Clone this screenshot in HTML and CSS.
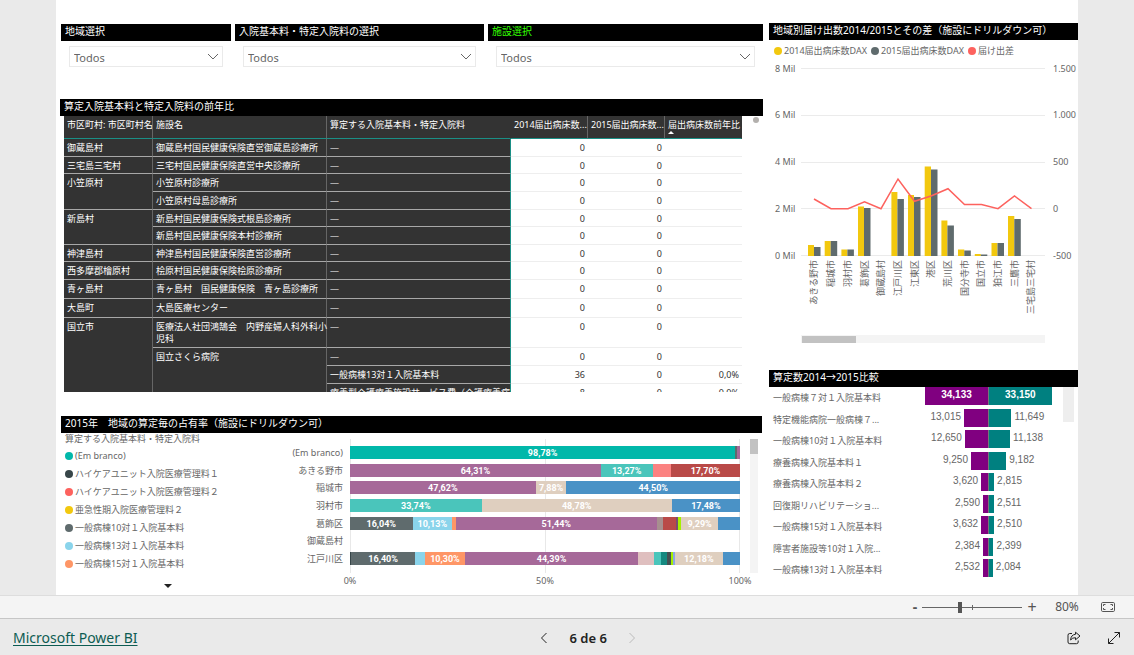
FILE: index.html
```html
<!DOCTYPE html>
<html lang="ja">
<head>
<meta charset="utf-8">
<meta name="viewport" content="width=device-width, initial-scale=1">
<title>Microsoft Power BI</title>
<link rel="stylesheet" href="styles.css">
</head>
<body>
<main class="report">
  <div class="col col-left">
    <form class="filters">
      <div class="filter filter-s">
        <label class="title" for="f-area">地域選択</label>
        <div class="select-box">
          <select id="f-area"><option>Todos</option></select>
          <svg class="chev" viewBox="0 0 12 8" aria-hidden="true"><path d="M1 1l5 5 5-5"/></svg>
        </div>
      </div>
      <div class="filter filter-m">
        <label class="title" for="f-fee">入院基本料・特定入院料の選択</label>
        <div class="select-box">
          <select id="f-fee"><option>Todos</option></select>
          <svg class="chev" viewBox="0 0 12 8" aria-hidden="true"><path d="M1 1l5 5 5-5"/></svg>
        </div>
      </div>
      <div class="filter filter-l">
        <label class="title title-green" for="f-site">施設選択</label>
        <div class="select-box">
          <select id="f-site"><option>Todos</option></select>
          <svg class="chev" viewBox="0 0 12 8" aria-hidden="true"><path d="M1 1l5 5 5-5"/></svg>
        </div>
      </div>
    </form>

    <section class="matrix">
      <h2 class="title">算定入院基本料と特定入院料の前年比</h2>
      <div class="matrix-body">
        <table>
          <colgroup><col class="c-city"><col class="c-site"><col><col class="c-num"><col class="c-num"><col class="c-num"></colgroup>
          <thead>
            <tr><th>市区町村: 市区町村名</th><th>施設名</th><th>算定する入院基本料・特定入院料</th><th>2014届出病床数...</th><th>2015届出病床数...</th><th>届出病床数前年比<span class="sort"></span></th></tr>
          </thead>
          <tbody>
            <tr><th>御蔵島村</th><th>御蔵島村国民健康保険直営御蔵島診療所</th><th>—</th><td>0</td><td>0</td><td></td></tr>
            <tr class="short"><th>三宅島三宅村</th><th>三宅村国民健康保険直営中央診療所</th><th>—</th><td>0</td><td>0</td><td></td></tr>
            <tr><th rowspan="2">小笠原村</th><th>小笠原村診療所</th><th>—</th><td>0</td><td>0</td><td></td></tr>
            <tr><th>小笠原村母島診療所</th><th>—</th><td>0</td><td>0</td><td></td></tr>
            <tr class="short"><th rowspan="2">新島村</th><th>新島村国民健康保険式根島診療所</th><th>—</th><td>0</td><td>0</td><td></td></tr>
            <tr><th>新島村国民健康保険本村診療所</th><th>—</th><td>0</td><td>0</td><td></td></tr>
            <tr class="short"><th>神津島村</th><th>神津島村国民健康保険直営診療所</th><th>—</th><td>0</td><td>0</td><td></td></tr>
            <tr><th>西多摩郡檜原村</th><th>桧原村国民健康保険桧原診療所</th><th>—</th><td>0</td><td>0</td><td></td></tr>
            <tr class="tall"><th>青ヶ島村</th><th>青ヶ島村　国民健康保険　青ヶ島診療所</th><th>—</th><td>0</td><td>0</td><td></td></tr>
            <tr class="tall"><th>大島町</th><th>大島医療センター</th><th>—</th><td>0</td><td>0</td><td></td></tr>
            <tr><th rowspan="4">国立市</th><th>医療法人社団鴻鵠会　内野産婦人科外科小<br>児科</th><th>—</th><td>0</td><td>0</td><td></td></tr>
            <tr><th rowspan="3">国立さくら病院</th><th>—</th><td>0</td><td>0</td><td></td></tr>
            <tr><th>一般病棟13対１入院基本料</th><td>36</td><td>0</td><td>0,0%</td></tr>
            <tr><th>療養型介護療養施設サービス費（介護療養病</th><td>8</td><td>0</td><td>0,0%</td></tr>
          </tbody>
        </table>
        <span class="scroll-dot"></span>
      </div>
    </section>

    <section class="share">
      <h2 class="title">2015年　地域の算定毎の占有率（施設にドリルダウン可）</h2>
      <div class="share-body">
        <div class="share-legend">
          <p>算定する入院基本料・特定入院料</p>
          <ul>
            <li><i class="teal"></i>(Em branco)</li>
            <li><i class="ink"></i>ハイケアユニット入院医療管理料１</li>
            <li><i class="coral"></i>ハイケアユニット入院医療管理料２</li>
            <li><i class="gold"></i>亜急性期入院医療管理料２</li>
            <li><i class="slate"></i>一般病棟10対１入院基本料</li>
            <li><i class="sky"></i>一般病棟13対１入院基本料</li>
            <li><i class="orange"></i>一般病棟15対１入院基本料</li>
          </ul>
          <span class="more"></span>
        </div>
        <ul class="share-names">
          <li>(Em branco)</li><li>あきる野市</li><li>稲城市</li><li>羽村市</li><li>葛飾区</li><li>御蔵島村</li><li>江戸川区</li>
        </ul>
        <div class="share-plot">
          <div class="bars">
            <div class="bar"><b class="teal" style="width:98.78%">98,78%</b><b class="slate" style="width:.4%"></b><b class="plum" style="width:.82%"></b></div>
            <div class="bar"><b class="plum" style="width:64.31%">64,31%</b><b class="aqua" style="width:13.27%">13,27%</b><b class="rose" style="width:4.72%"></b><b class="brick" style="width:17.7%">17,70%</b></div>
            <div class="bar"><b class="plum" style="width:47.62%">47,62%</b><b class="sand" style="width:7.88%">7,88%</b><b class="blue" style="width:44.5%">44,50%</b></div>
            <div class="bar"><b class="aqua" style="width:33.74%">33,74%</b><b class="sand" style="width:48.78%">48,78%</b><b class="blue" style="width:17.48%">17,48%</b></div>
            <div class="bar"><b class="slate" style="width:16.04%">16,04%</b><b class="sky" style="width:10.13%">10,13%</b><b class="orange" style="width:1%"></b><b class="plum" style="width:51.44%">51,44%</b><b class="taupe" style="width:1.6%"></b><b class="brick" style="width:3.3%"></b><b class="violet" style="width:.6%"></b><b class="lime" style="width:.9%"></b><b class="sand" style="width:9.29%">9,29%</b><b class="blue" style="width:5.7%"></b></div>
            <div class="bar"></div>
            <div class="bar"><b class="ink" style="width:.3%"></b><b class="slate" style="width:16.4%">16,40%</b><b class="sky" style="width:2.5%"></b><b class="orange" style="width:10.3%">10,30%</b><b class="plum" style="width:44.39%">44,39%</b><b class="blush" style="width:4%"></b><b class="aqua" style="width:1.8%"></b><b class="pine" style="width:1.5%"></b><b class="coal" style="width:1.1%"></b><b class="lime" style="width:.6%"></b><b class="peri" style="width:.5%"></b><b class="sand" style="width:12.18%">12,18%</b><b class="blue" style="width:4.43%"></b></div>
          </div>
          <div class="axis"><span>0%</span><span>50%</span><span>100%</span></div>
        </div>
        <div class="vscroll"><span></span></div>
      </div>
    </section>
  </div>

  <div class="col col-right">
    <section class="combo">
      <h2 class="title">地域別届け出数2014/2015とその差（施設にドリルダウン可）</h2>
      <ul class="combo-legend">
        <li><i class="gold"></i>2014届出病床数DAX</li>
        <li><i class="slate"></i>2015届出病床数DAX</li>
        <li><i class="coral"></i>届け出差</li>
      </ul>
      <svg class="combo-chart" viewBox="769 60 309 285" role="img" aria-label="地域別届け出数">
        <path class="grid" d="M801 68.5h244M801 115.5h244M801 162.5h244M801 208.5h244M801 255.5h244"/>
        <g class="tick">
          <text x="775" y="72">8 Mil</text><text x="775" y="118">6 Mil</text><text x="775" y="165">4 Mil</text><text x="775" y="212">2 Mil</text><text x="775" y="259">0 Mil</text>
          <text x="1053" y="72">1.500</text><text x="1053" y="118">1.000</text><text x="1053" y="165">500</text><text x="1053" y="212">0</text><text x="1053" y="259">-500</text>
        </g>
        <path class="f-gold" d="M808 245h6v11h-6zM824.7 241h6v15h-6zM841.4 249.5h6v6.500h-6zM858 206.500h6v49.500h-6zM891.400 192h6v64h-6zM908 195h6v61h-6zM924.700 166.500h6.300v89.500h-6.300zM941.400 220.500h6v35.500h-6zM958 249.500h6.300v6.500h-6.300zM974.800 254h6v2h-6zM991.500 243h6v13h-6zM1008 216h6.300v40h-6.300z"/>
        <path class="f-slate" d="M814 247h6.500v9h-6.500zM830.700 241h6.500v15h-6.500zM847.400 249.500h6.500v6.500h-6.500zM864 208h6.500v48h-6.500zM897.400 199h6.500v57h-6.500zM914 197h6.500v59h-6.500zM931 169.500h6.500v86.500h-6.500zM947.400 225.500h6.500v30.500h-6.500zM964.300 250.500h6.500v5.500h-6.500zM980.800 254.600h6.500v1.400h-6.500zM997.500 243h6.500v13h-6.500zM1014.300 219h6.500v37h-6.500z"/>
        <polyline class="diff" points="814,199 831,208.700 848,208.700 864.500,201.700 881,208.700 898,179 914.500,201.300 931,196 948,188.700 964.500,204.500 981.500,204.500 998,208.700 1014.500,196 1031.500,208.700"/>
        <g class="names">
          <text transform="translate(817 260) rotate(-90)">あきる野市</text><text transform="translate(834 260) rotate(-90)">稲城市</text><text transform="translate(851 260) rotate(-90)">羽村市</text><text transform="translate(868 260) rotate(-90)">葛飾区</text><text transform="translate(884 260) rotate(-90)">御蔵島村</text><text transform="translate(901 260) rotate(-90)">江戸川区</text><text transform="translate(918 260) rotate(-90)">江東区</text><text transform="translate(934 260) rotate(-90)">港区</text><text transform="translate(951 260) rotate(-90)">荒川区</text><text transform="translate(968 260) rotate(-90)">国分寺市</text><text transform="translate(984 260) rotate(-90)">国立市</text><text transform="translate(1001 260) rotate(-90)">狛江市</text><text transform="translate(1018 260) rotate(-90)">三鷹市</text><text transform="translate(1034 260) rotate(-90)">三宅島三宅村</text>
        </g>
        <path fill="#f4f4f4" d="M801 335h244v8h-244z"/><path fill="#c2c2c2" d="M802 336h54v7h-54z"/>
      </svg>
    </section>

    <section class="tornado">
      <h2 class="title">算定数2014→2015比較</h2>
      <div class="tornado-body">
        <ul class="rows">
          <li class="first"><span class="name">一般病棟７対１入院基本料</span><span class="side l"><b style="width:100%">34,133</b></span><span class="side r"><b style="width:98%">33,150</b></span></li>
          <li><span class="name">特定機能病院一般病棟７...</span><span class="side l">13,015<b style="width:38%"></b></span><span class="side r"><b style="width:35%"></b>11,649</span></li>
          <li><span class="name">一般病棟10対１入院基本料</span><span class="side l">12,650<b style="width:37%"></b></span><span class="side r"><b style="width:33%"></b>11,138</span></li>
          <li><span class="name">療養病棟入院基本料１</span><span class="side l">9,250<b style="width:27%"></b></span><span class="side r"><b style="width:27%"></b>9,182</span></li>
          <li><span class="name">療養病棟入院基本料２</span><span class="side l">3,620<b style="width:11%"></b></span><span class="side r"><b style="width:8%"></b>2,815</span></li>
          <li><span class="name">回復期リハビリテーショ...</span><span class="side l">2,590<b style="width:8%"></b></span><span class="side r"><b style="width:8%"></b>2,511</span></li>
          <li><span class="name">一般病棟15対１入院基本料</span><span class="side l">3,632<b style="width:11%"></b></span><span class="side r"><b style="width:8%"></b>2,510</span></li>
          <li><span class="name">障害者施設等10対１入院...</span><span class="side l">2,384<b style="width:8%"></b></span><span class="side r"><b style="width:7%"></b>2,399</span></li>
          <li><span class="name">一般病棟13対１入院基本料</span><span class="side l">2,532<b style="width:8%"></b></span><span class="side r"><b style="width:6%"></b>2,084</span></li>
        </ul>
        <span class="tornado-thumb"></span>
      </div>
    </section>
  </div>
</main>

<div class="zoombar">
  <button type="button" class="step" aria-label="Reduzir">-</button>
  <input type="range" min="0" max="100" value="38" aria-label="Zoom">
  <button type="button" class="step plus" aria-label="Ampliar">+</button>
  <span class="pct">80%</span>
  <button type="button" class="fit" aria-label="Ajustar à página">
    <svg width="14" height="10" viewBox="0 0 14 10"><rect x=".5" y=".5" width="13" height="9" rx="1.200"/><path d="M2.500 4V2.500H4.500M9.500 2.500H11.500V4M11.500 6V7.500H9.500M4.500 7.500H2.500V6"/></svg>
  </button>
</div>

<footer class="footer">
  <a href="#">Microsoft Power BI</a>
  <nav class="pager">
    <button type="button" aria-label="Anterior"><svg width="8" height="12" viewBox="0 0 8 12"><path d="M6.500 1L1.500 6l5 5"/></svg></button>
    <span>6 de 6</span>
    <button type="button" disabled aria-label="Próxima"><svg width="8" height="12" viewBox="0 0 8 12"><path d="M1.500 1l5 5-5 5"/></svg></button>
  </nav>
  <div class="actions">
    <button type="button" aria-label="Compartilhar"><svg width="14" height="14" viewBox="0 0 14 14"><path d="M5 2.500H2.700Q1 2.500 1 4.200V11Q1 12.700 2.700 12.700H9.500Q11.200 12.700 11.200 11V9.500"/><path d="M8.500 1.200L13 5 8.500 8.800V6.700Q5.300 6.500 3.600 9 3.900 3.800 8.500 3.300Z"/></svg></button>
    <button type="button" aria-label="Tela inteira"><svg width="14" height="14" viewBox="0 0 14 14"><path d="M1.500 12.500l11-11M7.500 1.500h5v5M1.500 7.500v5h5"/></svg></button>
  </div>
</footer>
</body>
</html>
```

FILE: styles.css
```css
* { box-sizing: border-box; }

body {
  margin: 0;
  min-height: 100vh;
  display: flex;
  flex-direction: column;
  background: #eaeaea;
  color: #666;
  font: 9px/12px "Noto Sans", "Noto Sans CJK JP", sans-serif;
}

h2, p, ul { margin: 0; padding: 0; font-weight: 400; }
ul { list-style: none; }
button { border: 0; padding: 0; background: none; font: inherit; color: inherit; }
svg { fill: none; stroke: currentColor; }

.report {
  flex: 1;
  margin: 0 56px;
  padding: 23px 0 0 4px;
  display: grid;
  grid-template-columns: 703fr 309fr;
  gap: 6px;
  background: #fff;
}
.col { display: flex; flex-direction: column; min-width: 0; }

.title {
  display: block;
  height: 17px;
  padding: 0 4px;
  background: #000;
  color: #fff;
  font-size: 10px;
  line-height: 15px;
  white-space: nowrap;
}
.title-green { color: #3f0; }

/* slicers */
.filters { display: flex; gap: 4px; padding: 1px 0 0 1px; }
.filter-s { flex: 170; }
.filter-m { flex: 249; }
.filter-l { flex: 275; }
.select-box { position: relative; margin: 5px 8px 0; }
.select-box select {
  display: block;
  width: 100%;
  height: 21px;
  padding: 1px 4px 0;
  border: 1px solid #eaeaea;
  appearance: none;
  background: #fff;
  color: #666;
  font: 11px "Noto Sans", sans-serif;
}
.chev { position: absolute; right: 4px; top: 7px; width: 12px; height: 8px; pointer-events: none; }

/* matrix */
.matrix { margin-top: 32px; }
.matrix-body {
  display: grid;
  grid-template-columns: minmax(0, 1fr) 21px;
  align-items: start;
  height: 276px;
  overflow: hidden;
  padding-left: 4px;
}
.matrix table {
  width: 100%;
  table-layout: fixed;
  border-collapse: separate;
  border-spacing: 0;
  white-space: nowrap;
}
.c-city { width: 89px; }
.c-site { width: 174px; }
.c-num { width: 77px; }
.matrix th, .matrix td { height: 18px; padding: 3px 3px 2px; vertical-align: top; }
.matrix th {
  padding-right: 0;
  background: #333;
  color: #fff;
  font-weight: 400;
  text-align: left;
  border-bottom: 1px solid #a8a8a8;
  border-right: 1px solid #666;
}
.matrix td { color: #333; text-align: right; border-bottom: 1px solid #eee; }
.matrix thead th { height: 23px; border-bottom-color: #1a8f86; }
.matrix thead th:nth-child(3), .matrix thead th:last-child { border-right-color: #333; }
.matrix tbody th:has(+ td) { border-right-color: #1a8f86; }
.matrix .short > * { height: 17px; padding-bottom: 1px; }
.matrix .tall > * { height: 19px; }
.sort { display: block; width: 0; border: 3px solid transparent; border-top: 0; border-bottom-color: #fff; }
.scroll-dot { width: 6px; height: 6px; margin: 1px 4px 0 11px; border-radius: 50%; background: #b3b0ad; }

/* stacked share chart */
.share { margin: 24px 1px 0; }
.share-body { display: flex; padding-left: 4px; }
.share-legend { width: 205px; line-height: 12px; }
.share-legend ul { display: grid; gap: 6px; margin-top: 5px; }
.share-legend li, .combo-legend li { display: flex; align-items: center; gap: 2px; white-space: nowrap; }
i { width: 8px; height: 8px; border-radius: 50%; flex: none; }
.more { display: block; width: 0; margin: 14px auto 0; border: 4px solid transparent; border-bottom: 0; border-top-color: #222; }
.share-names {
  width: 73px;
  height: 119px;
  margin: 13px 7px 0 0;
  display: flex;
  flex-direction: column;
  justify-content: space-between;
  text-align: right;
  line-height: 13px;
}
.share-plot { flex: 1; margin-top: 6px; }
.bars {
  height: 134px;
  padding: 7px 0 8px;
  display: flex;
  flex-direction: column;
  justify-content: space-between;
  background:
    linear-gradient(#e8e8e8, #e8e8e8) left / 1px 100% no-repeat,
    linear-gradient(#e8e8e8, #e8e8e8) center / 1px 100% no-repeat,
    linear-gradient(#e8e8e8, #e8e8e8) right / 1px 100% no-repeat;
}
.bar { display: flex; height: 13px; }
.bar b { color: #fff; font: 700 9px/15px Roboto, sans-serif; text-align: center; overflow: hidden; }
.axis { display: flex; justify-content: space-between; margin: 2px -12px 0; }
.axis span { width: 24px; text-align: center; }
.vscroll { width: 8px; height: 134px; margin: 6px 4px 0 10px; background: #f4f4f4; }
.vscroll span { display: block; height: 15px; background: #c2c2c2; }

.teal { background: #01b8aa; }
.ink { background: #374649; }
.coral { background: #fd625e; }
.gold { background: #f2c80f; }
.slate { background: #5f6b6d; }
.sky { background: #8ad4eb; }
.orange { background: #fe9666; }
.plum { background: #a66999; }
.aqua { background: #4ac5bb; }
.rose { background: #fb8281; }
.brick { background: #b94a48; }
.sand { background: #dfcfbf; }
.blue { background: #4a92c6; }
.taupe { background: #a78f8f; }
.violet { background: #78506f; }
.lime { background: #a5f000; }
.blush { background: #dfbfbf; }
.pine { background: #168980; }
.coal { background: #475052; }
.peri { background: #8da6e8; }

/* combo chart */
.combo-legend { display: flex; gap: 4px; padding: 5px 5px 3px; }
.combo-chart { display: block; width: 100%; }
.combo-chart text { fill: #666; stroke: none; }
.combo-chart path { stroke: none; }
.combo-chart .grid { stroke: #ebebeb; }
.names { text-anchor: end; }
.f-gold { fill: #f2c80f; }
.f-slate { fill: #5f6b6d; }
.diff { stroke: #fd625e; stroke-width: 1.500; }

/* tornado chart */
.tornado { margin-top: 25px; }
.tornado-body { display: flex; }
.rows { flex: 1; height: 190px; display: flex; flex-direction: column; justify-content: space-between; padding-left: 4px; }
.rows li { display: flex; height: 18px; }
.name { flex: 1; padding-top: 5px; white-space: nowrap; }
.side { width: 64px; display: flex; gap: 3px; font: 10px/16px "Liberation Sans", Arial, sans-serif; }
.side b { height: 18px; color: #fff; text-align: center; flex: none; }
.l { justify-content: flex-end; border-right: 1px solid #777; }
.l b { background: #800080; }
.r b { background: #008080; }
.tornado-thumb { width: 11px; height: 35px; margin: 0 4px 0 10px; background: #eee; }

/* zoom bar */
.zoombar {
  display: flex;
  align-items: center;
  justify-content: flex-end;
  height: 24px;
  padding-right: 19px;
  border: solid #ddd;
  border-width: 1px 0;
  border-bottom-color: #c6c6c6;
  background: #f4f4f4;
  color: #555;
  font-size: 12px;
}
.step { width: 14px; font-size: 14px; font-weight: 700; }
.plus { font-size: 16px; font-weight: 400; width: 20px; }
.zoombar input {
  width: 100px;
  height: 12px;
  margin: 0;
  appearance: none;
  background:
    linear-gradient(#666, #666) 50% 50% / 1px 5px no-repeat,
    linear-gradient(#666, #666) center / 100% 1px no-repeat;
}
.zoombar input::-webkit-slider-thumb { appearance: none; width: 4px; height: 11px; background: #555; }
.pct { width: 36px; margin-left: 7px; text-align: center; }
.fit { width: 14px; height: 10px; margin-left: 16px; display: flex; }

/* footer */
.footer {
  display: flex;
  align-items: center;
  justify-content: space-between;
  height: 36px;
  padding: 2px 0 0 13px;
  color: #222;
  font-size: 13px;
  line-height: 20px;
}
.footer a { color: #0d5c52; font-size: 14px; text-underline-offset: 2px; }
.pager { display: flex; align-items: center; margin-right: 15px; font-weight: 600; }
.pager button { width: 24px; height: 24px; margin: 0; display: grid; place-items: center; }
.pager span { width: 64px; text-align: center; }
.pager button:disabled { color: #bbb; }
.actions { display: flex; }
.actions button { width: 40px; height: 24px; display: grid; place-items: center; }
```
